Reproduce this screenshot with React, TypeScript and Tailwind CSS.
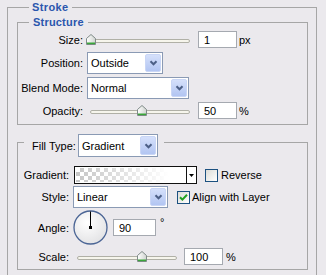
import React from "react";

// Little down chevron used on the XP-style combo buttons
const Chevron: React.FC = () => (
  <svg width="9" height="6" viewBox="0 0 9 6">
    <polyline points="1.5,1.2 4.5,4.3 7.5,1.2" fill="none" stroke="#4c5f86" strokeWidth="2" />
  </svg>
);

const Dropdown: React.FC<{ value: string; className: string }> = ({ value, className }) => (
  <div className={`flex h-[22px] items-stretch border border-[#8a9ab4] bg-white ${className}`}>
    <span className="flex flex-1 items-center pl-[3px] text-black">{value}</span>
    <span className="m-px flex w-[16px] items-center justify-center rounded-[2px] border border-[#c9d6f6] bg-[linear-gradient(#d5e0fb,#b2c5f2)]">
      <Chevron />
    </span>
  </div>
);

const NumberInput: React.FC<{ value: string; className: string }> = ({ value, className }) => (
  <div className={`flex h-[17px] items-center border border-[#a5a9b0] bg-white pl-[5px] ${className}`}>
    {value}
  </div>
);

// Slider knob: pentagon with a green foot
const Thumb: React.FC<{ className: string }> = ({ className }) => (
  <svg width="10" height="11" viewBox="0 0 10 11" className={className}>
    <defs>
      <linearGradient id="thumbFill" x1="0" y1="0" x2="1" y2="0">
        <stop offset="0" stopColor="#ffffff" />
        <stop offset="1" stopColor="#cfd3cf" />
      </linearGradient>
    </defs>
    <path d="M0.5 4.5 L5 0.5 L9.5 4.5 V10.5 H0.5 Z" fill="url(#thumbFill)" stroke="#7f8a88" />
    <rect x="1" y="8.5" width="8" height="1.6" fill="#3aa63a" />
  </svg>
);

const Slider: React.FC<{ className: string; thumb: string }> = ({ className, thumb }) => (
  <div className={`relative h-[12px] ${className}`}>
    <div className="absolute left-[4px] right-0 top-[5px] h-[4px] rounded-full border border-[#b0b0a6] bg-[#f6f5ec]" />
    <Thumb className={`absolute top-0 ${thumb}`} />
  </div>
);

const Checkbox: React.FC<{ checked?: boolean }> = ({ checked }) => (
  <span className="flex h-[13px] w-[13px] items-center justify-center border border-[#1c5180] bg-[linear-gradient(135deg,#dcdcd7,#ffffff)]">
    {checked && (
      <svg width="9" height="9" viewBox="0 0 9 9">
        <polyline points="1,4.2 3.4,6.6 8,1.8" fill="none" stroke="#21a121" strokeWidth="2" />
      </svg>
    )}
  </span>
);

const AngleDial: React.FC = () => (
  <svg width="35" height="35" viewBox="0 0 35 35" className="ml-[4px]">
    <defs>
      <radialGradient id="dialFill" cx="0.4" cy="0.35" r="0.7">
        <stop offset="0" stopColor="#ffffff" />
        <stop offset="1" stopColor="#e2e2e4" />
      </radialGradient>
    </defs>
    <circle cx="17.5" cy="17.5" r="16.5" fill="url(#dialFill)" stroke="#4b6595" strokeWidth="1.3" />
    <line x1="17.5" y1="1.5" x2="17.5" y2="17.5" stroke="#000" strokeWidth="1" />
    <rect x="16" y="16" width="3" height="3" fill="#000" />
  </svg>
);

const App: React.FC = () => {
  return (
    <div className="h-[275px] w-[326px] overflow-hidden bg-[#ebe9ed] font-['Liberation_Sans',Arial,sans-serif] text-[11px] leading-[14px] text-black">
      {/* Stroke group */}
      <fieldset className="ml-[7px] h-[290px] w-[310px] border border-[#a6a6a6] pl-[9px] pr-[8px] pt-[1px]">
        <legend className="ml-[12px] px-[3px] font-bold text-[#2a56ad] tracking-[0.4px]">Stroke</legend>

        {/* Structure */}
        <fieldset className="border border-[#a6a6a6] pb-[5px]">
          <legend className="ml-[11px] px-[4px] font-bold text-[#2a56ad] tracking-[0.2px]">Structure</legend>

          <div className="mt-[2px] flex h-[17px] items-center">
            <span className="w-[65px] text-right">Size:</span>
            <Slider className="ml-[3px] w-[104px]" thumb="left-0" />
            <NumberInput value="1" className="ml-[8px] w-[39px]" />
            <span className="ml-[2px]">px</span>
          </div>

          <div className="mt-[4px] flex h-[22px] items-center">
            <span className="w-[65px] text-right">Position:</span>
            <Dropdown value="Outside" className="ml-[4px] w-[76px]" />
          </div>

          <div className="mt-[3px] flex h-[22px] items-center">
            <span className="w-[65px] text-right">Blend Mode:</span>
            <Dropdown value="Normal" className="ml-[4px] w-[102px]" />
          </div>

          <div className="mt-[3px] flex h-[17px] items-center">
            <span className="w-[65px] text-right">Opacity:</span>
            <Slider className="ml-[3px] w-[104px]" thumb="left-[51px]" />
            <NumberInput value="50" className="ml-[8px] w-[39px]" />
            <span className="ml-[2px]">%</span>
          </div>
        </fieldset>

        {/* Fill */}
        <fieldset className="mt-[9px] border border-[#a6a6a6] pb-[4px]">
          <legend className="ml-[6px] flex items-start pl-[8px] pr-[6px]">
            <div className="-mb-[7px] flex h-[23px] items-center">
              <span className="w-[46px]">Fill Type:</span>
              <Dropdown value="Gradient" className="h-[23px] w-[80px]" />
            </div>
          </legend>

          <div className="mt-[16px] flex h-[18px] items-center">
            <span className="w-[51px] text-right">Gradient:</span>
            <div className="ml-[5px] flex h-[18px] w-[123px] border border-[#111]">
              <div className="flex-1 border border-white [background:linear-gradient(to_right,rgba(255,255,255,0),#ffffff_85%),repeating-conic-gradient(#c6c6c6_0_25%,#ffffff_0_50%)_0_0/8px_8px]" />
              <div className="flex w-[10px] items-center justify-center border-l border-[#111] bg-white">
                <svg width="5" height="3" viewBox="0 0 5 3">
                  <polygon points="0,0 5,0 2.5,3" fill="#000" />
                </svg>
              </div>
            </div>
            <span className="ml-[8px]">
              <Checkbox />
            </span>
            <span className="ml-[3px]">Reverse</span>
          </div>

          <div className="mt-[2px] flex h-[22px] items-center">
            <span className="w-[51px] text-right">Style:</span>
            <Dropdown value="Linear" className="ml-[4px] w-[95px]" />
            <span className="ml-[9px]">
              <Checkbox checked />
            </span>
            <span className="ml-[2px]">Align with Layer</span>
          </div>

          <div className="mt-[2px] flex h-[35px] items-center">
            <span className="w-[51px] text-right">Angle:</span>
            <AngleDial />
            <NumberInput value="90" className="ml-[5px] w-[43px]" />
            <span className="mb-[12px] ml-[4px]">°</span>
          </div>

          <div className="mt-[3px] flex h-[17px] items-center">
            <span className="w-[51px] text-right">Scale:</span>
            <Slider className="ml-[4px] w-[104px]" thumb="left-[64px]" />
            <NumberInput value="100" className="ml-[7px] w-[39px]" />
            <span className="ml-[3px]">%</span>
          </div>
        </fieldset>
      </fieldset>
    </div>
  );
};

export default App;
